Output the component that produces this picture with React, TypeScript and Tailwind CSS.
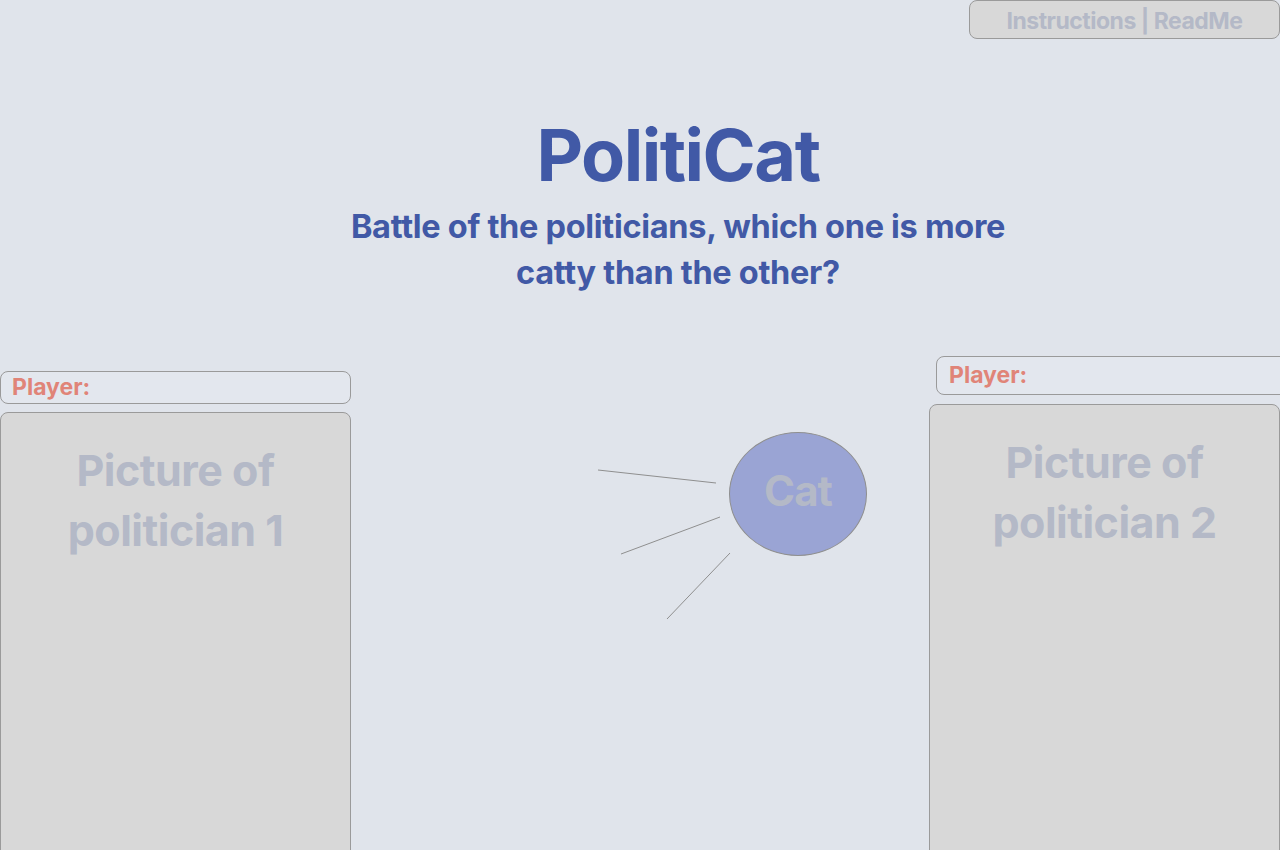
import React from "react";

export default function App() {
  return (
    <div className="h-[850px] w-[1280px] overflow-hidden bg-[#e0e4eb] font-['Inter','Noto_Sans',sans-serif] [font-variant-ligatures:none]">
      <div className="flex justify-end">
        <button className="flex h-[39px] w-[311px] items-center justify-center rounded-lg border border-[#9a9a9a] bg-[#d8d8d8] pt-[3px] text-[23px] font-bold tracking-[-0.5px] text-[#b4b9c7]">
          Instructions | ReadMe
        </button>
      </div>
      <div className="mt-[66px] pl-[76px] text-center text-[#4159a6]">
        <h1 className="text-[72px] font-bold leading-[100px] tracking-[-1.5px]">PolitiCat</h1>
        <p className="mx-auto -mt-[1px] max-w-[680px] text-[32.5px] font-bold leading-[46px] tracking-[-0.3px]">
          Battle of the politicians, which one is more catty than the other?
        </p>
      </div>
      <div className="mt-[60px] flex items-start">
        <div className="mt-[15px] w-[351px] shrink-0">
          <div className="flex h-[33px] items-center rounded-lg border border-[#9a9a9a] bg-[#e3e7ee] px-[11px] text-[23px] font-bold text-[#e08478]">
            Player:
          </div>
          <div className="mt-[8px] h-[500px] rounded-t-lg border border-[#9a9a9a] bg-[#d8d8d8] pt-[27px] text-center text-[43px] font-bold leading-[60px] tracking-[-0.5px] text-[#b4b9c7]">
            Picture of
            <br />
            politician 1
          </div>
        </div>
        <div className="relative h-[494px] flex-1">
          <svg className="absolute inset-0 h-full w-full" viewBox="0 0 578 494">
            <line x1="247" y1="114" x2="365" y2="127" stroke="#8f8f8f" strokeWidth="1" />
            <line x1="270" y1="198" x2="369" y2="161" stroke="#8f8f8f" strokeWidth="1" />
            <line x1="316" y1="263" x2="379" y2="197" stroke="#8f8f8f" strokeWidth="1" />
          </svg>
          <div className="absolute left-[378px] top-[76px] flex h-[124px] w-[138px] items-center justify-center rounded-[50%] border border-[#8f8f8f] bg-[#9aa4d4] pb-[8px] text-[42px] font-bold tracking-[-1px] text-[#b4b9c7]">
            Cat
          </div>
        </div>
        <div className="w-[351px] shrink-0">
          <div className="ml-[7px] mr-[-8px] flex h-[39px] items-center rounded-l-lg border border-[#9a9a9a] bg-[#e3e7ee] px-[12px] text-[23px] font-bold text-[#e08478]">
            Player:
          </div>
          <div className="mt-[9px] h-[500px] rounded-t-lg border border-[#9a9a9a] bg-[#d8d8d8] pt-[27px] text-center text-[43px] font-bold leading-[60px] tracking-[-0.5px] text-[#b4b9c7]">
            Picture of
            <br />
            politician 2
          </div>
        </div>
      </div>
    </div>
  );
}
